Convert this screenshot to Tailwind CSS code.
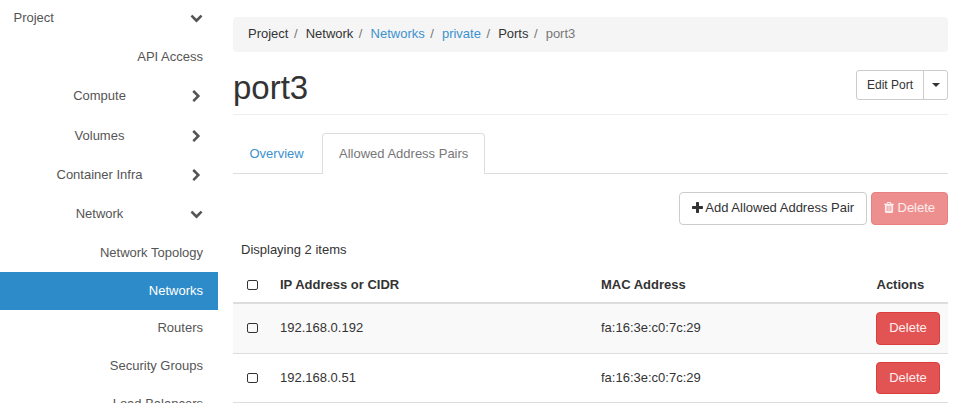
<!DOCTYPE html>
<html lang="en">
<head>
<meta charset="utf-8">
<title>port3</title>
<script src="https://cdn.jsdelivr.net/npm/@tailwindcss/browser@4"></script>
</head>
<body class="h-[403px] overflow-hidden bg-white font-['Liberation_Sans',Arial,sans-serif] text-[13px] leading-[18px] text-[#333]">
<svg class="hidden">
  <symbol id="down" viewBox="0 0 1792 1792"><path d="M1683 808l-742 741q-19 19-45 19t-45-19l-742-741q-19-19-19-45.500t19-45.500l166-165q19-19 45-19t45 19l531 531 531-531q19-19 45-19t45 19l166 165q19 19 19 45.500t-19 45.500z"/></symbol>
  <symbol id="right" viewBox="0 0 1792 1792"><path d="M1363 877l-742 742q-19 19-45 19t-45-19l-166-166q-19-19-19-45t19-45l531-531-531-531q-19-19-19-45t19-45l166-166q19-19 45-19t45 19l742 742q19 19 19 45t-19 45z"/></symbol>
</svg>
<div class="flex h-full">
  <nav class="h-full w-[218px] shrink-0 overflow-hidden text-[#555]">
    <div class="flex h-[37px] items-center justify-between pr-[15px] pb-[2px] pl-[13.5px]"><span>Project</span><svg class="size-[13px] fill-current"><use href="#down"/></svg></div>
    <div class="flex h-[39px] items-center justify-end pr-[15px]">API Access</div>
    <div class="flex h-[39px] items-center"><span class="w-[199px] shrink-0 -mr-[9px] text-center">Compute</span><svg class="mt-px size-[13px] shrink-0 fill-current"><use href="#right"/></svg></div>
    <div class="flex h-[40px] items-center pt-px"><span class="w-[199px] shrink-0 -mr-[9px] text-center">Volumes</span><svg class="mt-px size-[13px] shrink-0 fill-current"><use href="#right"/></svg></div>
    <div class="flex h-[39px] items-center"><span class="w-[199px] shrink-0 -mr-[9px] text-center">Container Infra</span><svg class="mt-px size-[13px] shrink-0 fill-current"><use href="#right"/></svg></div>
    <div class="flex h-[39px] items-center"><span class="w-[199px] shrink-0 -mr-[9px] text-center">Network</span><svg class="size-[13px] shrink-0 fill-current"><use href="#down"/></svg></div>
    <div class="flex h-[39px] items-center justify-end pr-[15px]">Network Topology</div>
    <div class="flex h-[38px] items-center justify-end bg-[#2e8bc9] pr-[15px] text-white">Networks</div>
    <div class="flex h-[37px] items-center justify-end pr-[15px] pb-[2px]">Routers</div>
    <div class="flex h-[38px] items-center justify-end pr-[15px]">Security Groups</div>
    <div class="flex h-[38px] items-center justify-end pr-[15px]">Load Balancers</div>
  </nav>
  <main class="ml-[15px] w-[715px] shrink-0 pt-[17px]">
    <ol class="flex h-[35px] items-center rounded bg-[#f5f5f5] px-[15px] pb-[2px]">
      <li>Project</li><li class="w-[17.2px] pl-[5.5px] text-[#777]">/</li>
      <li>Network</li><li class="w-[17.2px] pl-[5.5px] text-[#777]">/</li>
      <li class="text-[#3c92ce]">Networks</li><li class="w-[17.2px] pl-[5.5px] text-[#777]">/</li>
      <li class="text-[#3c92ce]">private</li><li class="w-[17.2px] pl-[5.5px] text-[#777]">/</li>
      <li>Ports</li><li class="w-[17.2px] pl-[5.5px] text-[#777]">/</li>
      <li class="text-[#777]">port3</li>
    </ol>
    <header class="flex h-[63px] items-start justify-between border-b border-[#eee] pt-[18px]">
      <h1 class="text-[33px] leading-[36px]">port3</h1>
      <div class="flex h-[30px] rounded-[3px] border border-[#ccc] text-[12px]">
        <button class="w-[67px] border-r border-[#ccc]">Edit Port</button>
        <button class="flex w-[23px] items-center justify-center" aria-label="More"><span class="border-x-4 border-t-4 border-x-transparent border-t-[#333]"></span></button>
      </div>
    </header>
    <div class="mt-[18px] flex h-[41px] border-b border-[#ddd]">
      <div class="w-[89px] pt-[12px] pl-[16.5px] text-[#3c92ce]">Overview</div>
      <div class="h-[41px] w-[163px] rounded-t border border-b-0 border-[#ddd] bg-white pt-[11px] pl-[16px] text-[#777]">Allowed Address Pairs</div>
    </div>
    <div class="mt-[18px] flex justify-end gap-[4px]">
      <button class="flex h-[33px] w-[188px] items-center rounded border border-[#ccc] pb-[2px] pl-[12px] whitespace-nowrap"><svg class="mr-[2.3px] mb-px size-[11px] fill-current" viewBox="192 128 1408 1408"><path d="M1600 736v192q0 40-28 68t-68 28h-416v416q0 40-28 68t-68 28h-192q-40 0-68-28t-28-68v-416h-416q-40 0-68-28t-28-68v-192q0-40 28-68t68-28h416v-416q0-40 28-68t68-28h192q40 0 68 28t28 68v416h416q40 0 68 28t28 68z"/></svg>Add Allowed Address Pair</button>
      <button class="flex h-[33px] w-[77px] items-center rounded border border-[#e98080] bg-[#ee8f8f] pb-[2px] pl-[12px] text-white/85"><svg class="mr-[3.5px] mb-px h-[11px] w-[10px] fill-current" viewBox="192 128 1408 1536" preserveAspectRatio="none"><path d="M704 1376v-704q0-14-9-23t-23-9h-64q-14 0-23 9t-9 23v704q0 14 9 23t23 9h64q14 0 23-9t9-23zm256 0v-704q0-14-9-23t-23-9h-64q-14 0-23 9t-9 23v704q0 14 9 23t23 9h64q14 0 23-9t9-23zm256 0v-704q0-14-9-23t-23-9h-64q-14 0-23 9t-9 23v704q0 14 9 23t23 9h64q14 0 23-9t9-23zm-544-992h448l-48-117q-7-9-17-11h-317q-10 2-17 11zm928 32v64q0 14-9 23t-23 9h-96v948q0 83-47 143.500t-113 60.500h-832q-66 0-113-58.500t-47-141.500v-952h-96q-14 0-23-9t-9-23v-64q0-14 9-23t23-9h309l70-167q15-37 54-63t79-26h320q40 0 79 26t54 63l70 167h309q14 0 23 9t9 23z"/></svg>Delete</button>
    </div>
    <div class="mt-[16px] pl-[8px]">Displaying 2 items</div>
    <div class="mt-[7px] grid h-[38px] grid-cols-[47px_321px_275.500px_1fr] items-center border-b-2 border-[#ddd] pt-[2px] font-bold">
      <span class="ml-[14px] h-[10px] w-[11px] rounded-[2px] border border-[#333]"></span><span>IP Address or CIDR</span><span>MAC Address</span><span>Actions</span>
    </div>
    <div class="grid h-[50px] grid-cols-[47px_321px_275px_1fr] items-center border-b border-[#ddd] bg-[#f9f9f9]">
      <span class="mb-px ml-[14px] h-[10px] w-[11px] rounded-[2px] border border-[#333]"></span><span class="pb-[2px]">192.168.0.192</span><span class="pb-[2px]">fa:16:3e:c0:7c:29</span><button class="h-[33px] w-[64px] rounded border border-[#dc3d3d] bg-[#e25353] pb-[2px] text-white/90">Delete</button>
    </div>
    <div class="grid h-[49px] grid-cols-[47px_321px_275px_1fr] items-center border-b border-[#ddd]">
      <span class="ml-[14px] h-[10px] w-[11px] rounded-[2px] border border-[#333]"></span><span>192.168.0.51</span><span>fa:16:3e:c0:7c:29</span><button class="h-[32px] w-[64px] rounded border border-[#dc3d3d] bg-[#e25353] text-white/90">Delete</button>
    </div>
  </main>
</div>
</body>
</html>
